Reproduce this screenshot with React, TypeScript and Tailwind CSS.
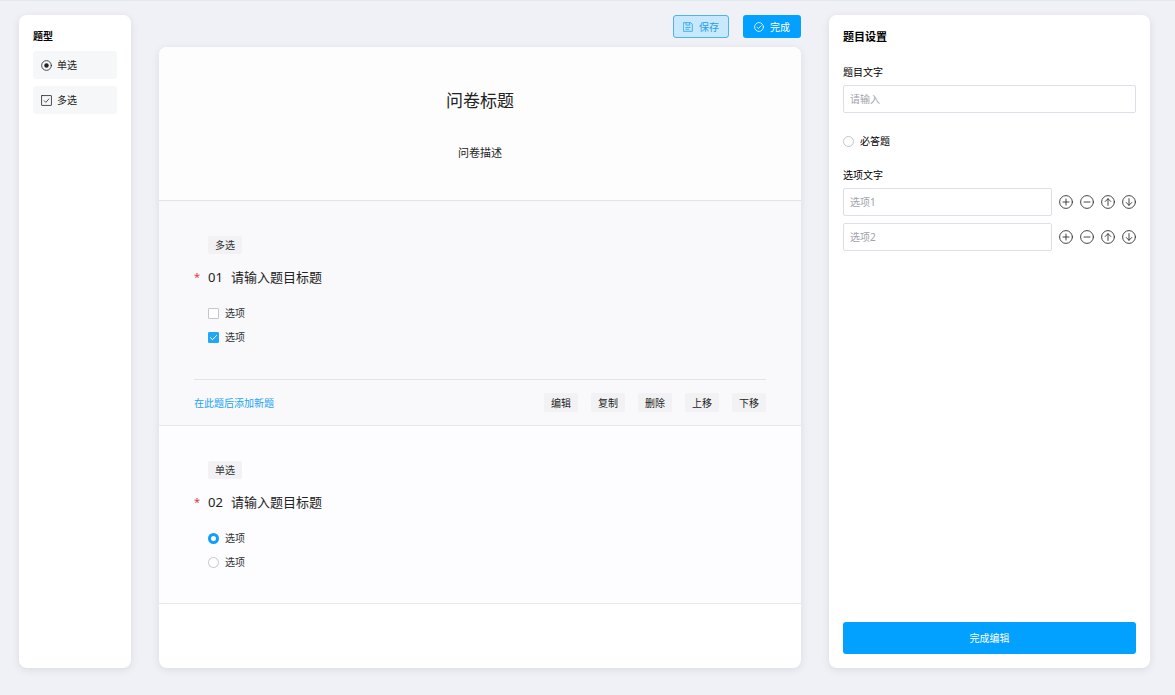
import React, { useState } from "react";

type IconProps = { className?: string };

function Svg({ className, children }: IconProps & { children: React.ReactNode }) {
  return (
    <svg
      viewBox="0 0 14 14"
      fill="none"
      stroke="currentColor"
      strokeWidth="0.9"
      strokeLinecap="round"
      strokeLinejoin="round"
      className={className}
      aria-hidden="true"
    >
      {children}
    </svg>
  );
}

function PlusIcon({ className }: IconProps) {
  return (
    <Svg className={className}>
      <circle cx="7" cy="7" r="6.4" />
      <path d="M7 4v6M4 7h6" />
    </Svg>
  );
}

function MinusIcon({ className }: IconProps) {
  return (
    <Svg className={className}>
      <circle cx="7" cy="7" r="6.4" />
      <path d="M4 7h6" />
    </Svg>
  );
}

function UpIcon({ className }: IconProps) {
  return (
    <Svg className={className}>
      <circle cx="7" cy="7" r="6.4" />
      <path d="M7 10.4V3.8M4.2 6.5L7 3.7l2.8 2.8" />
    </Svg>
  );
}

function DownIcon({ className }: IconProps) {
  return (
    <Svg className={className}>
      <circle cx="7" cy="7" r="6.4" />
      <path d="M7 3.6v6.6M4.2 7.5L7 10.3l2.8-2.8" />
    </Svg>
  );
}

function SaveIcon({ className }: IconProps) {
  return (
    <Svg className={className}>
      <path d="M1 1h10l2 2v10H1zM4.2 1v3.4h5.2V1M4 7.6h6M4 10.2h4" strokeWidth="1.1" />
    </Svg>
  );
}

function DoneIcon({ className }: IconProps) {
  return (
    <Svg className={className}>
      <circle cx="7" cy="7" r="6.2" strokeWidth="1.1" />
      <path d="M4.2 7.2l2 2 3.8-4" strokeWidth="1.1" />
    </Svg>
  );
}

function SingleIcon({ className }: IconProps) {
  return (
    <Svg className={className}>
      <circle cx="7" cy="7" r="6.2" strokeWidth="1" />
      <circle cx="7" cy="7" r="2.8" fill="currentColor" stroke="none" />
    </Svg>
  );
}

function MultiIcon({ className }: IconProps) {
  return (
    <Svg className={className}>
      <rect x="0.7" y="0.7" width="12.6" height="12.6" rx="0.6" strokeWidth="1" />
      <path d="M4 7.2l2.2 2.2L10 5" strokeWidth="1" />
    </Svg>
  );
}

function TypeButton({ icon, label }: { icon: React.ReactNode; label: string }) {
  return (
    <button type="button" className="flex h-7 w-full items-center gap-[5px] rounded-[3px] bg-[#f6f7f9] px-2 text-[#222]">
      {icon}
      {label}
    </button>
  );
}

function Choice({ kind, name, checked, onChange }: { kind: "checkbox" | "radio"; name: string; checked: boolean; onChange: () => void }) {
  return (
    <label className="flex h-4 items-center gap-1.5 text-[#303133]">
      {kind === "checkbox" ? (
        <span className="grid">
          <input
            type="checkbox"
            name={name}
            checked={checked}
            onChange={onChange}
            className="col-start-1 row-start-1 size-[11px] appearance-none rounded-[1px] border border-[#c4c6cc] bg-white checked:border-[#22a7f5] checked:bg-[#22a7f5]"
          />
          {checked && (
            <svg viewBox="0 0 11 11" className="pointer-events-none col-start-1 row-start-1 size-[11px]" fill="none" stroke="#fff" strokeWidth="1" aria-hidden="true">
              <path d="M2.2 5.4l2.3 2.3 4.2-4.4" />
            </svg>
          )}
        </span>
      ) : (
        <input
          type="radio"
          name={name}
          checked={checked}
          onChange={onChange}
          className="size-[11px] appearance-none rounded-full border border-[#c4c6cc] bg-white checked:border-[3px] checked:border-[#109ffb]"
        />
      )}
      选项
    </label>
  );
}

type QuestionProps = { number: string; kind: "checkbox" | "radio"; tag: string; selected?: boolean };

function Question({ number, kind, tag, selected = false }: QuestionProps) {
  const [values, setValues] = useState(kind === "checkbox" ? [false, true] : [true, false]);
  const pick = (index: number) =>
    setValues(values.map((value, i) => (kind === "radio" ? i === index : i === index ? !value : value)));

  return (
    <section className={selected ? "border-b border-[#e8e8ec] bg-[#f9f9fb] px-[35px] pt-[35px]" : "border-b border-[#e8e8ec] bg-[#fdfcfe] px-[35px] pt-[35px]"}>
      <div className="pl-3.5">
        <span className="inline-flex h-[18px] items-center rounded-[2px] bg-[#f2f2f4] px-[7px] align-top text-[#303133]">{tag}</span>
      </div>
      <h2 className="mt-3.5 flex text-[13px] leading-[18px] text-[#222]">
        <span className="w-3.5 text-[11px] text-[#e0393e]">*</span>
        <span>{number}</span>
        <span className="ml-2">请输入题目标题</span>
      </h2>
      <div className="mt-[19px] flex flex-col items-start gap-2 pb-[33px] pl-3.5">
        {values.map((value, i) => (
          <Choice key={i} kind={kind} name={`question-${number}`} checked={value} onChange={() => pick(i)} />
        ))}
      </div>
      {selected && (
        <div className="mt-px flex items-center justify-between border-t border-[#e4e4e8] pt-[13px] pb-[13px]">
          <a href="#add" className="text-[#1ba3f5]">
            在此题后添加新题
          </a>
          <div className="flex gap-[13px]">
            {["编辑", "复制", "删除", "上移", "下移"].map((action) => (
              <button key={action} type="button" className="h-[19px] rounded-[2px] bg-[#f2f2f4] px-[7px] text-[#222]">
                {action}
              </button>
            ))}
          </div>
        </div>
      )}
    </section>
  );
}

const rowActions = [
  { label: "添加选项", Icon: PlusIcon },
  { label: "删除选项", Icon: MinusIcon },
  { label: "选项上移", Icon: UpIcon },
  { label: "选项下移", Icon: DownIcon },
];

const panel = "rounded-[8px] bg-white shadow-[0_2px_8px_rgba(0,0,0,0.09)]";
const field = "h-7 w-full min-w-0 rounded-[2px] border border-[#dcdfe6] bg-white px-1.5 text-[#303133] outline-none placeholder:text-[#a0a3a9] focus:border-[#02a0ff]";

export default function App() {
  const [required, setRequired] = useState(false);

  return (
    <div className="flex min-h-screen gap-7 border-t border-[#e2eaee] bg-[#f0f1f6] pt-3.5 pr-[25px] pb-[27px] pl-[19px] font-['Noto_Sans','Noto_Sans_CJK_SC',sans-serif] text-[10px] leading-[14px] text-black">
      <aside className={`${panel} w-28 shrink-0 p-3.5`}>
        <h2 className="font-bold">题型</h2>
        <div className="mt-2 flex flex-col gap-[7px]">
          <TypeButton icon={<SingleIcon className="size-[11px]" />} label="单选" />
          <TypeButton icon={<MultiIcon className="size-[11px]" />} label="多选" />
        </div>
      </aside>

      <main className="flex min-w-0 flex-1 flex-col">
        <div className="flex justify-end gap-3.5">
          <button type="button" className="flex h-[23px] items-center gap-1.5 rounded-[3px] border border-[#4bb4ea] bg-[#c8e8fe] px-[9px] text-[#1d9fec]">
            <SaveIcon className="size-[10px]" />
            保存
          </button>
          <button type="button" className="flex h-[23px] items-center gap-1.5 rounded-[3px] bg-[#02a0ff] px-[11px] text-white">
            <DoneIcon className="size-[10px]" />
            完成
          </button>
        </div>
        <div className={`${panel} mt-[9px] flex-1 overflow-hidden`}>
          <header className="border-b border-[#e4e4e8] bg-[#fdfdfe] pt-[42px] pb-[39px] text-center text-[#222]">
            <h1 className="text-[17px] leading-6">问卷标题</h1>
            <p className="mt-8 text-[11px] leading-4">问卷描述</p>
          </header>
          <Question number="01" kind="checkbox" tag="多选" selected />
          <Question number="02" kind="radio" tag="单选" />
        </div>
      </main>

      <aside className={`${panel} flex w-[321px] shrink-0 flex-col p-3.5`}>
        <h2 className="text-[11px] leading-4 font-bold">题目设置</h2>
        <label htmlFor="question-text" className="mt-5">
          题目文字
        </label>
        <input id="question-text" placeholder="请输入" className={`${field} mt-1.5`} />
        <label className="mt-[21px] flex items-center gap-1.5 self-start">
          <input
            type="checkbox"
            checked={required}
            onChange={() => setRequired(!required)}
            className="size-[11px] appearance-none rounded-full border border-[#c4c6cc] bg-white checked:border-[3px] checked:border-[#02a0ff]"
          />
          必答题
        </label>
        <h3 className="mt-5">选项文字</h3>
        <div className="mt-1.5 flex flex-col gap-[7px]">
          {["选项1", "选项2"].map((option) => (
            <div key={option} className="flex items-center gap-[7px]">
              <input aria-label={option} placeholder={option} className={field} />
              {rowActions.map(({ label, Icon }) => (
                <button key={label} type="button" aria-label={label} className="shrink-0 text-[#303133]">
                  <Icon className="size-3.5" />
                </button>
              ))}
            </div>
          ))}
        </div>
        <button type="button" className="mt-auto h-8 rounded-[3px] bg-[#02a0ff] text-white">
          完成编辑
        </button>
      </aside>
    </div>
  );
}
